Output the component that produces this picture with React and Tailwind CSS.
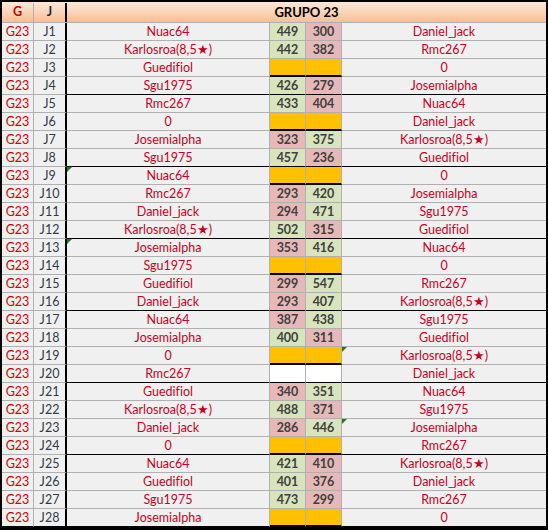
const rows = [
  [1, "Nuac64", 449, 300, "Daniel_jack"],
  [2, "Karlosroa(8,5★)", 442, 382, "Rmc267"],
  [3, "Guedifiol", null, null, "0"],
  [4, "Sgu1975", 426, 279, "Josemialpha"],
  [5, "Rmc267", 433, 404, "Nuac64"],
  [6, "0", null, null, "Daniel_jack"],
  [7, "Josemialpha", 323, 375, "Karlosroa(8,5★)"],
  [8, "Sgu1975", 457, 236, "Guedifiol"],
  [9, "Nuac64", null, null, "0"],
  [10, "Rmc267", 293, 420, "Josemialpha"],
  [11, "Daniel_jack", 294, 471, "Sgu1975"],
  [12, "Karlosroa(8,5★)", 502, 315, "Guedifiol"],
  [13, "Josemialpha", 353, 416, "Nuac64"],
  [14, "Sgu1975", null, null, "0"],
  [15, "Guedifiol", 299, 547, "Rmc267"],
  [16, "Daniel_jack", 293, 407, "Karlosroa(8,5★)"],
  [17, "Nuac64", 387, 438, "Sgu1975"],
  [18, "Josemialpha", 400, 311, "Guedifiol"],
  [19, "0", null, null, "Karlosroa(8,5★)"],
  [20, "Rmc267", "", "", "Daniel_jack"],
  [21, "Guedifiol", 340, 351, "Nuac64"],
  [22, "Karlosroa(8,5★)", 488, 371, "Sgu1975"],
  [23, "Daniel_jack", 286, 446, "Josemialpha"],
  [24, "0", null, null, "Rmc267"],
  [25, "Nuac64", 421, 410, "Karlosroa(8,5★)"],
  [26, "Guedifiol", 401, 376, "Daniel_jack"],
  [27, "Sgu1975", 473, 299, "Rmc267"],
  [28, "Josemialpha", null, null, "0"],
];

// green error markers in the top-left corner of some cells
const leftMark = [9, 13];
const rightMark = [19, 23];

function Mark() {
  return (
    <span className="absolute left-0 top-0 h-0 w-0 border-t-[5px] border-r-[5px] border-t-[#1a7f1a] border-r-transparent" />
  );
}

function ScoreCell({ value, other, line }) {
  let bg = "bg-[#ffc000]";
  let border = "border-b-2 border-b-black";
  if (value === "") {
    bg = "bg-white";
    border = line;
  } else if (value !== null) {
    bg = value > other ? "bg-[#d8e4bc]" : "bg-[#e6b8b7]";
    border = line;
  }
  return (
    <div className={`flex items-center justify-center border-r border-r-[#b0b0b0] pt-px font-bold text-[#404040] ${bg} ${border}`}>
      {value}
    </div>
  );
}

export default function App() {
  return (
    <div
      className="w-[548px] border-2 border-b-[3px] border-black bg-[#f0f0f0] text-[12.5px] leading-none [font-variant-ligatures:none]"
      style={{ fontFamily: "Lato, 'Liberation Sans', sans-serif" }}
    >
      <div className="grid h-[21px] grid-cols-[32px_33px_203px_36px_36px_204px] border-b border-b-[#b0b0b0] bg-gradient-to-b from-[#fde9d9] to-[#f7bf97] pt-px font-bold">
        <div className="flex items-center justify-center border-r border-r-[#b0b0b0] text-[#c00000]">G</div>
        <div className="flex items-center justify-center border-r-2 border-r-black text-[#1f2a3a]">J</div>
        <div className="col-span-4 flex items-center justify-center text-[13px] text-black">GRUPO 23</div>
      </div>
      {rows.map(([j, left, s1, s2, right]) => {
        const last = j === 28;
        const gray = last ? "border-b border-b-black" : "border-b border-b-[#b0b0b0]";
        const line = j % 4 === 0 || last ? "border-b border-b-black" : gray;
        return (
          <div key={j} className="grid h-[18px] grid-cols-[32px_33px_203px_36px_36px_204px]">
            <div className={`flex items-center justify-center border-r border-r-[#b0b0b0] pt-px text-[#d00000] ${gray}`}>G23</div>
            <div className={`flex items-center justify-center border-r-2 border-r-black pt-px text-[#2f3b4c] ${gray}`}>J{j}</div>
            <div className={`relative flex items-center justify-center border-r border-r-[#b0b0b0] pt-px text-[#c8001e] ${line}`}>
              {leftMark.includes(j) && <Mark />}
              {left}
            </div>
            <ScoreCell value={s1} other={s2} line={line} />
            <ScoreCell value={s2} other={s1} line={line} />
            <div className={`relative flex items-center justify-center pt-px text-[#c8001e] ${line}`}>
              {rightMark.includes(j) && <Mark />}
              {right}
            </div>
          </div>
        );
      })}
    </div>
  );
}
